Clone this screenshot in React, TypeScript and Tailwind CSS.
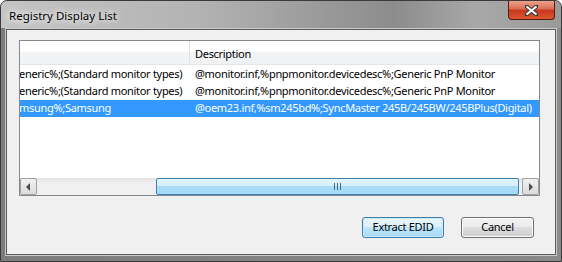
import React from 'react';

const rows = [
  { maker: 'eneric%;(Standard monitor types)', desc: '@monitor.inf,%pnpmonitor.devicedesc%;Generic PnP Monitor', selected: false },
  { maker: 'eneric%;(Standard monitor types)', desc: '@monitor.inf,%pnpmonitor.devicedesc%;Generic PnP Monitor', selected: false },
  { maker: 'msung%;Samsung', desc: '@oem23.inf,%sm245bd%;SyncMaster 245B/245BW/245BPlus(Digital)', selected: true },
];

function Win7Button({ label, isDefault }: { label: string; isDefault?: boolean }) {
  return (
    <div
      className={
        'h-[21px] rounded-[3px] border flex items-center justify-center text-black ' +
        (isDefault
          ? 'w-[82px] border-[#3c7fb1] bg-[linear-gradient(#eaf6fd_0%,#d9f0fc_50%,#bee6fd_50%,#a7d9f5_100%)] shadow-[inset_0_0_0_1px_#cbe9f9]'
          : 'w-[73px] border-[#707070] bg-[linear-gradient(#f2f2f2_0%,#ebebeb_50%,#dddddd_50%,#cfcfcf_100%)] shadow-[inset_0_0_0_1px_#fcfcfc]')
      }
    >
      {label}
    </div>
  );
}

function ScrollArrow({ dir }: { dir: 'left' | 'right' }) {
  return (
    <div className="w-[17px] h-full shrink-0 rounded-[2px] border border-[#a0a0a0] bg-[linear-gradient(#f2f2f2,#dcdcdc)] flex items-center justify-center">
      <svg width="5" height="8" viewBox="0 0 5 8">
        {dir === 'left' ? <path d="M4 0 L0 4 L4 8 Z" fill="#4d4d4d" /> : <path d="M1 0 L5 4 L1 8 Z" fill="#4d4d4d" />}
      </svg>
    </div>
  );
}

export default function App() {
  return (
    <div
      className="w-[562px] h-[262px] flex flex-col rounded-t-[7px] border border-[#3a3a3a] bg-[linear-gradient(90deg,#7c7c7c,#8a8a8a)] overflow-hidden text-[11px] tracking-[-0.3px]"
      style={{ fontFamily: '"Noto Sans", "Open Sans", sans-serif' }}
    >
      {/* title bar */}
      <div className="h-[27px] flex items-start justify-between shrink-0 bg-[linear-gradient(90deg,#c4c4c4_0%,#b3b3b3_35%,#8c8c8c_70%,#a8a8a8_85%,#9a9a9a_100%)]">
        <div className="pl-[8px] pt-[6px] text-[11.5px] tracking-normal text-black [text-shadow:0_0_6px_#ffffff,0_0_8px_#ffffff]">
          Registry Display List
        </div>
        <div className="mr-[6px] w-[47px] h-[19px] rounded-b-[4px] border border-t-0 border-[#5a1b10] bg-[linear-gradient(#eba08c_0%,#d86d52_45%,#c8361c_50%,#d9562f_100%)] flex items-center justify-center">
          <svg width="13" height="11" viewBox="0 0 13 11">
            <path d="M1 1 L12 10 M12 1 L1 10" stroke="#3a3a3a" strokeWidth="4" strokeLinecap="square" />
            <path d="M1.5 1.5 L11.5 9.5 M11.5 1.5 L1.5 9.5" stroke="#ffffff" strokeWidth="2.2" />
          </svg>
        </div>
      </div>

      {/* client area */}
      <div className="flex-1 mx-[5px] mb-[6px] mt-[1px] border border-[#5c5c5c] shadow-[0_0_0_1px_#c9c9c9] bg-[#f0f0f0] pl-[12px] pt-[10px] flex flex-col">
        <div className="w-[521px] h-[156px] border border-[#828790] bg-white flex flex-col text-black overflow-hidden">
          {/* header */}
          <div className="h-[24px] shrink-0 flex bg-[linear-gradient(#ffffff_0%,#ffffff_45%,#f3f4f6_50%,#f1f2f4_100%)] border-b border-[#e5e5e5]">
            <div className="w-[170px] shrink-0 border-r border-[#e0e0e0]" />
            <div className="pl-[5px] pt-[3px] flex items-center">Description</div>
          </div>
          <div className="h-[1px] shrink-0" />
          {rows.map((r, i) => (
            <div key={i} className={'h-[17px] shrink-0 flex items-center ' + (r.selected ? 'bg-[#3399ff] text-white' : '')}>
              <div className="w-[170px] shrink-0 overflow-hidden whitespace-nowrap">
                <span className="ml-[-1px]">{r.maker}</span>
              </div>
              <div className="pl-[5px] whitespace-nowrap">{r.desc}</div>
            </div>
          ))}
          <div className="flex-1" />
          {/* horizontal scrollbar */}
          <div className="h-[17px] shrink-0 flex bg-[linear-gradient(#e3e3e3,#f0f0f0_30%,#f0f0f0)]">
            <ScrollArrow dir="left" />
            <div className="flex-1 flex pl-[119px]">
              <div className="w-[363px] h-full rounded-[2px] border border-[#3c7fb1] bg-[linear-gradient(#e3f4fc_0%,#d6effc_45%,#a9dbf6_50%,#a6dbf6_100%)] flex items-center justify-center">
                <svg width="7" height="7" viewBox="0 0 7 7">
                  <path d="M0.5 0 V7 M3.5 0 V7 M6.5 0 V7" stroke="#466a7f" strokeWidth="1" />
                </svg>
              </div>
            </div>
            <ScrollArrow dir="right" />
          </div>
        </div>

        <div className="flex justify-end gap-[17px] pr-[21px] mt-[21px]">
          <Win7Button label="Extract EDID" isDefault />
          <Win7Button label="Cancel" />
        </div>
      </div>
    </div>
  );
}
